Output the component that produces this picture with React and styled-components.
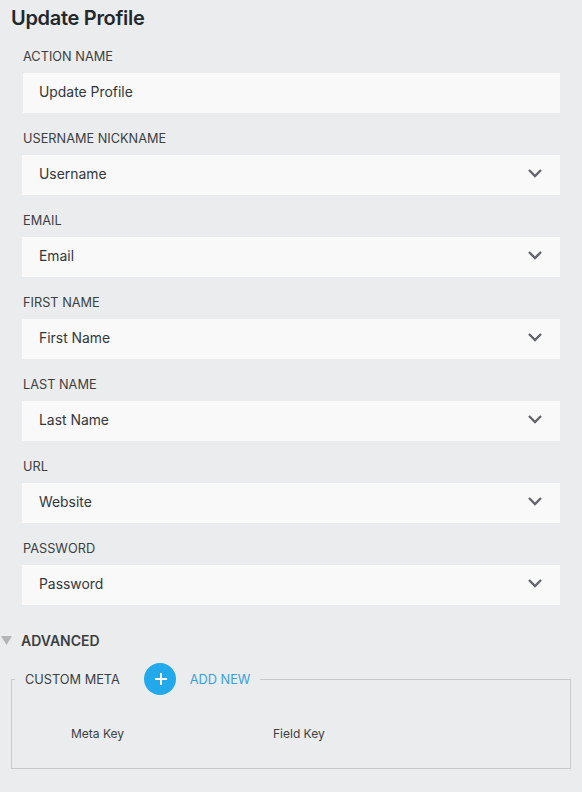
import React from "react";
import styled, { createGlobalStyle } from "styled-components";

const Global = createGlobalStyle`
  html, body {
    margin: 0;
    padding: 0;
    background: #ebecee;
    font-family: Inter, "Liberation Sans", sans-serif;
  }
`;

const Page = styled.div`
  width: 582px;
  height: 792px;
  overflow: hidden;
  box-sizing: border-box;
  padding-top: 6px;
  background: #ebecee;
`;

const Title = styled.h1`
  margin: 0 0 0 11px;
  font-size: 20px;
  line-height: 24px;
  font-weight: 600;
  letter-spacing: -0.3px;
  color: #23282d;
`;

const Fields = styled.div`
  display: flex;
  flex-direction: column;
  gap: 10px;
  margin-top: 11px;
  padding: 0 22px;
`;

const Field = styled.div`
  display: flex;
  flex-direction: column;
`;

const Label = styled.label`
  height: 32px;
  line-height: 32px;
  padding-left: 1px;
  font-size: 12.75px;
  color: #3c3f42;
`;

const Control = styled.div`
  box-sizing: border-box;
  display: flex;
  align-items: center;
  justify-content: space-between;
  height: 40px;
  margin-left: ${(p) => (p.$text ? "1px" : "0")};
  padding: 0 17px 2px ${(p) => (p.$text ? "16px" : "17px")};
  background: #f9f9f9;
  font-size: 13.9px;
  color: #32373c;
`;

const ChevronIcon = styled.svg`
  margin-bottom: 2px;
`;

const Advanced = styled.div`
  display: flex;
  align-items: center;
  gap: 9px;
  height: 20px;
  margin-top: 25px;
  padding-left: 1px;
  font-size: 14px;
  font-weight: 600;
  color: #3c3f42;
`;

const Meta = styled.fieldset`
  box-sizing: border-box;
  height: 106px;
  margin: 13px 11px 0;
  padding: 0;
  border: 1px solid #c6c8ca;
  border-radius: 0;
`;

const Legend = styled.legend`
  display: flex;
  align-items: center;
  margin-left: 3px;
  padding: 0 10px;
  font-size: 12.75px;
  color: #3c3f42;
`;

const Add = styled.span`
  display: flex;
  align-items: center;
  justify-content: center;
  width: 32px;
  height: 32px;
  margin: 0 14px 0 24px;
  border-radius: 50%;
  background: #21a9ec;
`;

const AddLabel = styled.span`
  color: #3a9fe0;
`;

const Columns = styled.div`
  display: flex;
  margin-top: 31px;
  padding-left: 59px;
  font-size: 12px;
  line-height: 16px;
  color: #3c3f42;
`;

const Column = styled.span`
  width: 202px;
`;

const Chevron = () => (
  <ChevronIcon width="16" height="10" viewBox="0 0 16 10" fill="none">
    <path d="M2 2l6 6 6-6" stroke="#63666a" strokeWidth="2.4" />
  </ChevronIcon>
);

const fields = [
  ["ACTION NAME", "Update Profile", true],
  ["USERNAME NICKNAME", "Username"],
  ["EMAIL", "Email"],
  ["FIRST NAME", "First Name"],
  ["LAST NAME", "Last Name"],
  ["URL", "Website"],
  ["PASSWORD", "Password"],
];

export default function App() {
  return (
    <Page>
      <Global />
      <Title>Update Profile</Title>
      <Fields>
        {fields.map(([label, value, text]) => (
          <Field key={label}>
            <Label>{label}</Label>
            <Control $text={text}>
              {value}
              {!text && <Chevron />}
            </Control>
          </Field>
        ))}
      </Fields>
      <Advanced>
        <svg width="11" height="9" viewBox="0 0 11 9">
          <path d="M0 0h11L5.5 9z" fill="#b4b5b7" />
        </svg>
        ADVANCED
      </Advanced>
      <Meta>
        <Legend>
          CUSTOM META
          <Add>
            <svg width="14" height="12" viewBox="0 0 14 12">
              <path d="M8 0v12M2 6h12" stroke="#fff" strokeWidth="2" />
            </svg>
          </Add>
          <AddLabel>ADD NEW</AddLabel>
        </Legend>
        <Columns>
          <Column>Meta Key</Column>
          <Column>Field Key</Column>
        </Columns>
      </Meta>
    </Page>
  );
}
